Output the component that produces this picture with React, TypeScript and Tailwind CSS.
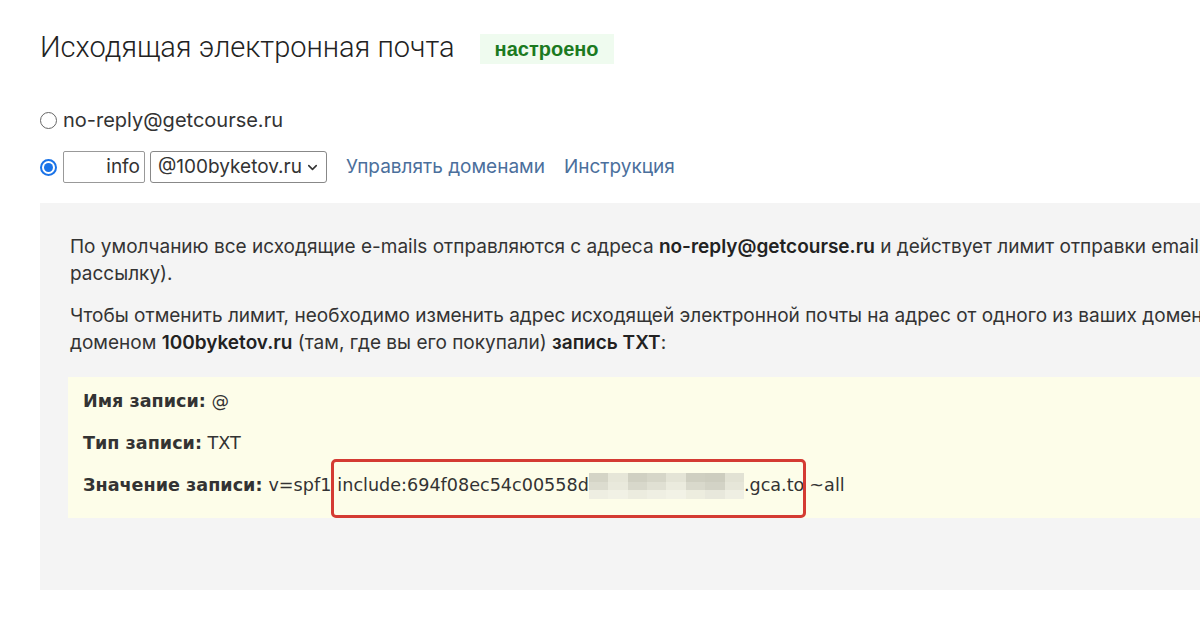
import { ChevronDown } from 'lucide-react';

const blurCells = [
  ['#d4d4c6', '#e6e6d8', '#d0d0c2', '#d6d6c8', '#e4e4d6', '#cfcfc1', '#cdcdbf', '#e2e2d4'],
  ['#dcdccf', '#e9e9dc', '#d8d8cb', '#e0e0d3', '#ebebde', '#d9d9cc', '#d3d3c6', '#e6e6d9'],
  ['#eeeee2', '#f1f1e5', '#ececdf', '#efefe3', '#f2f2e6', '#ededdf', '#e8e8dc', '#efefe3'],
];

function Radio({ checked }: { checked?: boolean }) {
  if (checked) {
    return (
      <span className="flex h-[17px] w-[17px] shrink-0 items-center justify-center rounded-full border-2 border-[#1a73e8] bg-white">
        <span className="h-[9px] w-[9px] rounded-full bg-[#1a73e8]" />
      </span>
    );
  }
  return <span className="block h-[17px] w-[17px] shrink-0 rounded-full border border-[#666] bg-white" />;
}

export default function App() {
  return (
    <div className="h-[628px] w-[1200px] overflow-hidden bg-white text-[#333]" style={{ fontFamily: 'Inter, "Noto Sans", sans-serif' }}>
      <div className="pl-[40px] pt-[30px]">
        <div className="flex items-center">
          <h1 className="text-[29px] font-light leading-[34px] text-[#222]" style={{ fontFamily: 'Roboto, sans-serif' }}>
            Исходящая электронная почта
          </h1>
          <span
            className="ml-[25px] mt-[3px] bg-[#effbef] px-[15px] py-[4px] text-[20px] font-bold leading-[22px] text-[#1b7a1f]"
            style={{ fontFamily: '"Liberation Sans", Arial, sans-serif' }}
          >
            настроено
          </span>
        </div>

        <div className="mt-[44px] flex items-center gap-[6px]">
          <Radio />
          <span className="text-[20px] leading-[24px] text-[#333]">no-reply@getcourse.ru</span>
        </div>

        <div className="mt-[19px] flex items-center">
          <Radio checked />
          <div className="ml-[6px] flex h-[32px] w-[82px] items-center justify-end rounded-[2px] border border-[#999] bg-white pr-[4px] text-[19px] text-[#333]">
            info
          </div>
          <div className="ml-[5px] flex h-[32px] w-[177px] items-center justify-between rounded-[3px] border border-[#888] bg-white pl-[7px] pr-[6px] text-[19px] text-[#333]">
            <span>@100byketov.ru</span>
            <ChevronDown className="h-[15px] w-[15px] text-[#333]" strokeWidth={2.5} />
          </div>
          <a className="ml-[19px] text-[19px] text-[#4b6f9c]">Управлять доменами</a>
          <a className="ml-[19px] text-[19px] text-[#4b6f9c]">Инструкция</a>
        </div>
      </div>

      <div className="ml-[40px] mt-[20px] h-[387px] w-[1400px] bg-[#f4f4f4] pl-[30px] pt-[30px]">
        <p className="text-[19px] leading-[27px] text-[#333]">
          По умолчанию все исходящие e-mails отправляются с адреса <b className="font-semibold text-[#222]">no-reply@getcourse.ru</b> и действует лимит отправки emails в сутки
          <br />
          рассылку).
        </p>
        <p className="mt-[15px] text-[19px] leading-[27px] text-[#333]">
          Чтобы отменить лимит, необходимо изменить адрес исходящей электронной почты на адрес от одного из ваших доменов и
          <br />
          доменом <b className="font-semibold text-[#222]">100byketov.ru</b> (там, где вы его покупали) <b className="font-semibold text-[#222]">запись TXT</b>:
        </p>

        <div
          className="-ml-[2px] mt-[21px] h-[141px] bg-[#fdfde9] pl-[15px] pt-[3px] text-[17.6px] leading-[42px] text-[#333]"
          style={{ fontFamily: '"DejaVu Sans", Verdana, sans-serif' }}
        >
          <div>
            <b>Имя записи:</b> @
          </div>
          <div>
            <b>Тип записи:</b> TXT
          </div>
          <div className="flex items-center">
            <b>Значение записи:</b>
            <span className="ml-[6px]">v=spf1</span>
            <span className="relative ml-[6px]">
              include:694f08ec54c00558d
              <span className="inline-flex h-[26px] w-[155px] flex-col align-middle">
                {blurCells.map((row, i) => (
                  <span key={i} className="flex flex-1">
                    {row.map((c, j) => (
                      <span key={j} className="flex-1" style={{ backgroundColor: c }} />
                    ))}
                  </span>
                ))}
              </span>
              .gca.to
              <span className="pointer-events-none absolute -left-[6px] -right-[2px] top-[-5px] h-[59px] rounded-[5px] border-[3px] border-[#d43b33]" />
            </span>
            <span className="ml-[5px]">~all</span>
          </div>
        </div>
      </div>
    </div>
  );
}
